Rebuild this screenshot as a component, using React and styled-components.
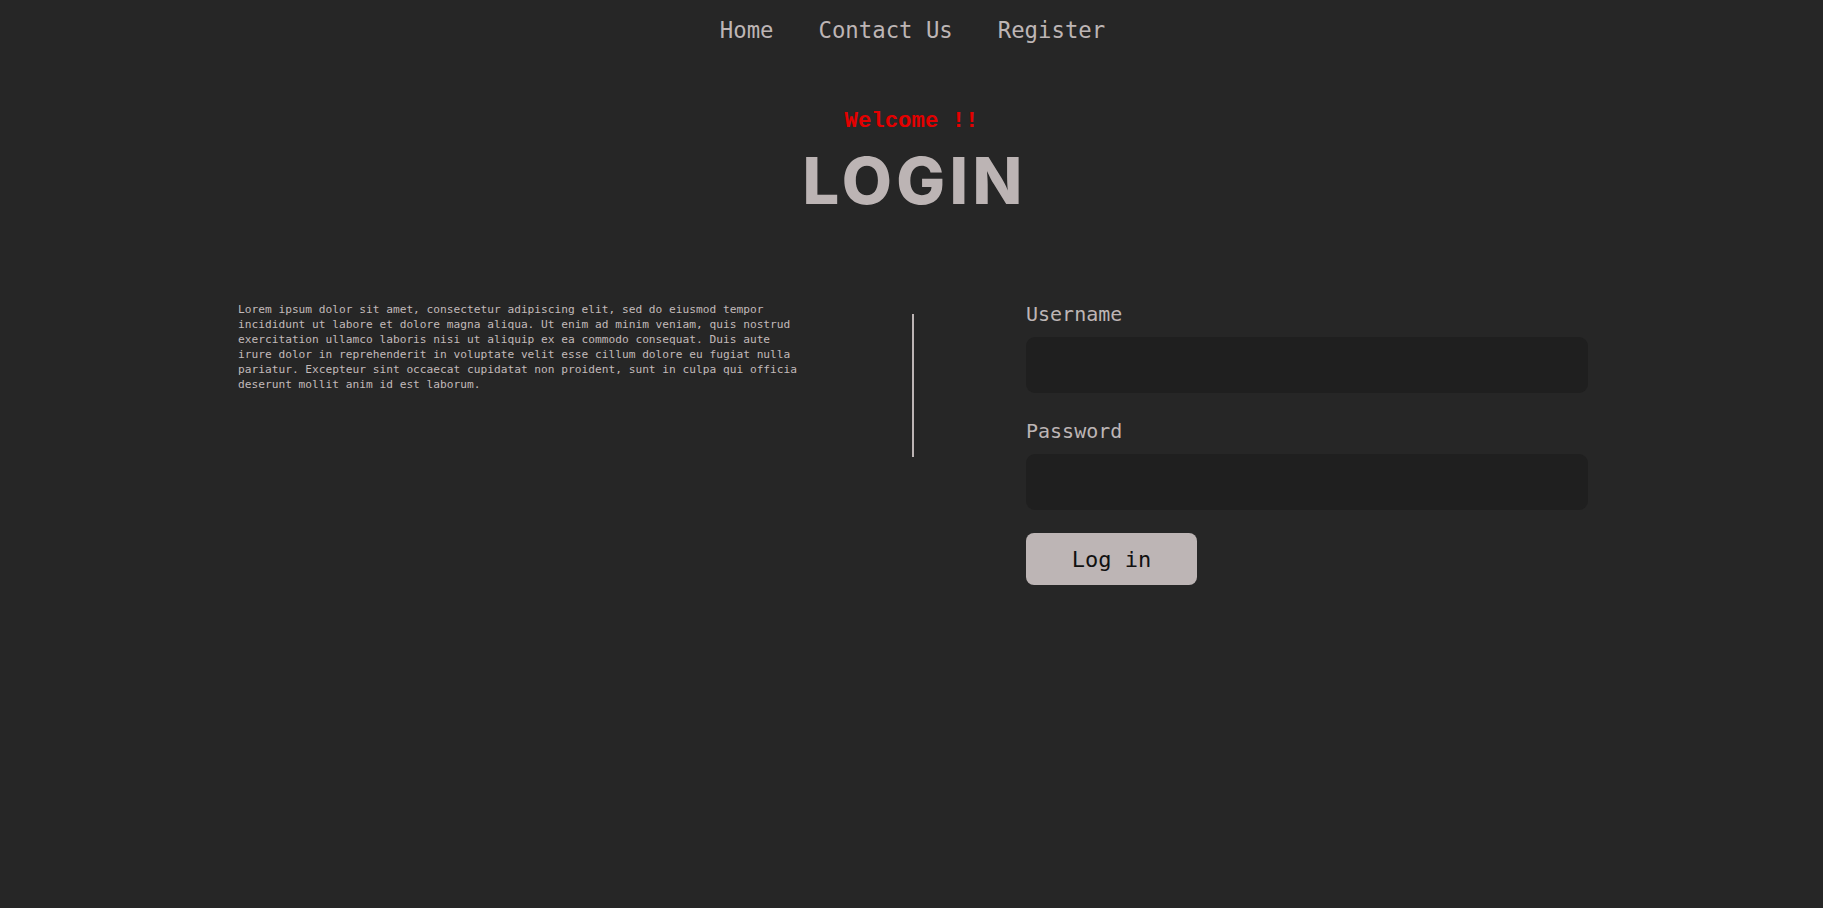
import React from "react";
import styled, { createGlobalStyle } from "styled-components";

const GlobalStyle = createGlobalStyle`
  html, body {
    margin: 0;
    padding: 0;
    background: #262626;
  }
  body {
    min-height: 908px;
    font-family: "DejaVu Sans Mono", "Liberation Mono", monospace;
    color: #bcb4b4;
  }
  * { box-sizing: border-box; }
`;

const Page = styled.div`
  min-height: 908px;
  background: #262626;
  display: flex;
  flex-direction: column;
  align-items: center;
`;

const Nav = styled.nav`
  display: flex;
  justify-content: center;
  gap: 45px;
  padding-top: 15px;
  padding-left: 2px;
`;

const NavLink = styled.a`
  font-family: "DejaVu Sans Mono", monospace;
  font-size: 22.3px;
  line-height: 30px;
  color: #bdb5b5;
  text-decoration: none;
  cursor: pointer;
`;

const Welcome = styled.p`
  margin: 63px 0 0;
  font-family: "Liberation Mono", "Courier New", monospace;
  font-weight: 700;
  font-size: 22.3px;
  line-height: 26px;
  color: #e30000;
`;

const Title = styled.h1`
  margin: 14px 0 0;
  padding-left: 6px;
  font-family: Inter, "Liberation Sans", sans-serif;
  font-weight: 800;
  font-size: 65px;
  line-height: 65px;
  color: #bcb4b4;
  letter-spacing: 4.3px;
`;

const Main = styled.main`
  margin-top: 89px;
  padding-left: 3px;
  display: grid;
  grid-template-columns: 562px 2px 562px;
  column-gap: 112px;
  align-items: start;
`;

const Intro = styled.p`
  margin: 0;
  font-family: "DejaVu Sans Mono", monospace;
  font-size: 11.2px;
  line-height: 15px;
  color: #c2baba;
`;

const Divider = styled.div`
  margin-top: 12px;
  width: 2px;
  height: 143px;
  background: #bcb4b4;
`;

const Form = styled.form`
  display: flex;
  flex-direction: column;
  align-items: flex-start;
`;

const Label = styled.label`
  font-family: "DejaVu Sans Mono", monospace;
  font-size: 20px;
  line-height: 24px;
  color: #bdb5b5;
  margin-top: ${(p) => (p.$first ? "0" : "26px")};
`;

const Input = styled.input`
  margin-top: 11px;
  width: 100%;
  height: 56px;
  border: none;
  outline: none;
  border-radius: 9px;
  background: #1f1f1f;
  color: #bcb4b4;
  font-family: "DejaVu Sans Mono", monospace;
  font-size: 18px;
  padding: 0 16px;
`;

const Button = styled.button`
  margin-top: 23px;
  width: 171px;
  height: 52px;
  border: none;
  border-radius: 8px;
  background: #bdb5b5;
  color: #111;
  font-family: "DejaVu Sans Mono", monospace;
  font-size: 22px;
  cursor: pointer;
`;

export default function App() {
  return (
    <>
      <GlobalStyle />
      <Page>
        <Nav>
          <NavLink>Home</NavLink>
          <NavLink>Contact Us</NavLink>
          <NavLink>Register</NavLink>
        </Nav>
        <Welcome>Welcome !!</Welcome>
        <Title>LOGIN</Title>
        <Main>
          <Intro>
            Lorem ipsum dolor sit amet, consectetur adipiscing elit, sed do
            eiusmod tempor incididunt ut labore et dolore magna aliqua. Ut enim
            ad minim veniam, quis nostrud exercitation ullamco laboris nisi ut
            aliquip ex ea commodo consequat. Duis aute irure dolor in
            reprehenderit in voluptate velit esse cillum dolore eu fugiat nulla
            pariatur. Excepteur sint occaecat cupidatat non proident, sunt in
            culpa qui officia deserunt mollit anim id est laborum.
          </Intro>
          <Divider />
          <Form onSubmit={(e) => e.preventDefault()}>
            <Label $first htmlFor="username">Username</Label>
            <Input id="username" type="text" />
            <Label htmlFor="password">Password</Label>
            <Input id="password" type="password" />
            <Button type="submit">Log in</Button>
          </Form>
        </Main>
      </Page>
    </>
  );
}
